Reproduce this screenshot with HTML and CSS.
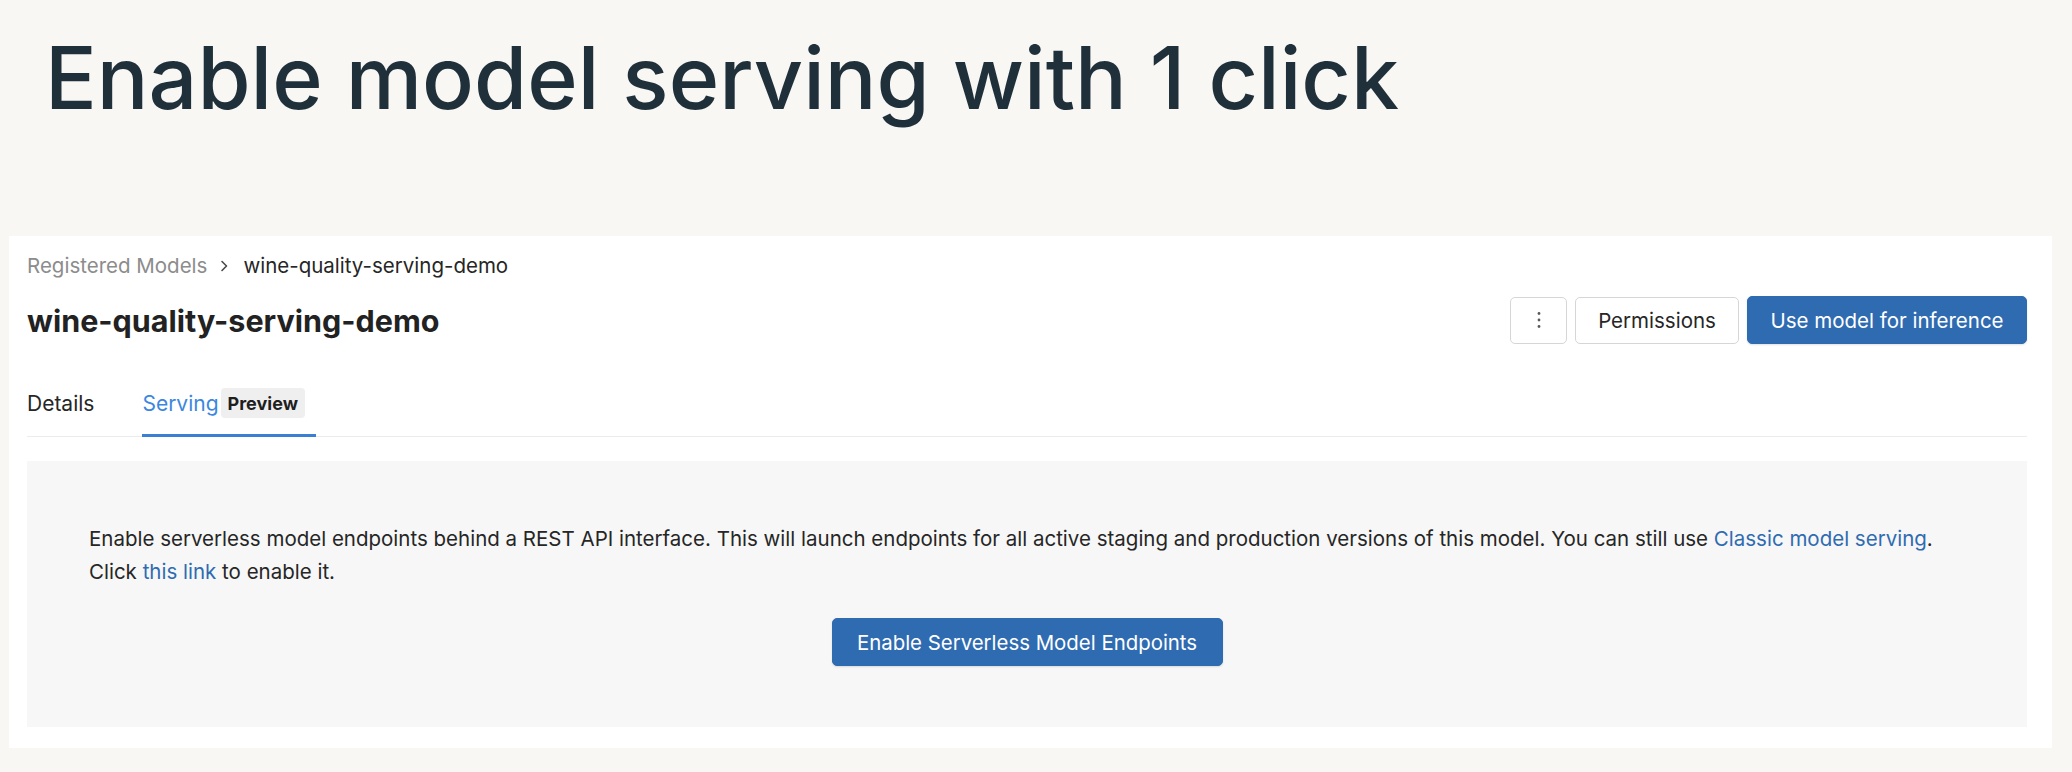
FILE: index.html
```html
<!DOCTYPE html>
<html lang="en">
<head>
<meta charset="utf-8">
<title>Enable model serving with 1 click</title>
<link rel="stylesheet" href="styles.css">
</head>
<body>
<div class="page">
  <h1 class="hero">Enable model serving with 1 click</h1>
  <section class="card">
    <nav class="breadcrumb">
      <span class="crumb-parent">Registered Models</span>
      <svg class="crumb-sep" width="10" height="14" viewBox="0 0 10 14" aria-hidden="true"><path d="M3 2.5 L7.5 7 L3 11.5" fill="none" stroke="#4a4a4a" stroke-width="1.6" stroke-linecap="round" stroke-linejoin="round"/></svg>
      <span class="crumb-current">wine-quality-serving-demo</span>
    </nav>
    <div class="title-row">
      <h2 class="model-title">wine-quality-serving-demo</h2>
      <div class="actions">
        <button class="btn btn-icon" aria-label="More">
          <svg width="4" height="18" viewBox="0 0 4 18" aria-hidden="true"><circle cx="2" cy="2.5" r="1.4" fill="#5a5a5a"/><circle cx="2" cy="9" r="1.4" fill="#5a5a5a"/><circle cx="2" cy="15.5" r="1.4" fill="#5a5a5a"/></svg>
        </button>
        <button class="btn btn-default">Permissions</button>
        <button class="btn btn-primary">Use model for inference</button>
      </div>
    </div>
    <div class="tabs">
      <div class="tab">Details</div>
      <div class="tab tab-active"><span>Serving</span><span class="badge">Preview</span></div>
    </div>
    <div class="panel">
      <p class="panel-text">Enable serverless model endpoints behind a REST API interface. This will launch endpoints for all active staging and production versions of this model. You can still use <a class="link" href="#">Classic model serving</a>.<br>Click <a class="link" href="#">this link</a> to enable it.</p>
      <div class="panel-actions">
        <button class="btn btn-primary btn-large">Enable Serverless Model Endpoints</button>
      </div>
    </div>
  </section>
</div>
</body>
</html>
```
FILE: styles.css
```css
* { box-sizing: border-box; }
html, body { margin: 0; padding: 0; }
body {
  background: #f8f7f4;
  font-family: Inter, "Noto Sans", "Liberation Sans", sans-serif;
  color: #262626;
}
.page {
  padding: 35px 20px 0 9px;
}
.hero {
  margin: 0 0 115px 0;
  padding-left: 36px;
  font-family: Inter, "Liberation Sans", sans-serif;
  font-size: 86px;
  line-height: 86px;
  font-weight: 500;
  letter-spacing: 0;
  color: #1f303a;
}
.card {
  background: #ffffff;
  height: 512px;
  padding: 18px 25px 21px 18px;
  display: flex;
  flex-direction: column;
}
.breadcrumb {
  display: flex;
  align-items: center;
  height: 24px;
  font-size: 20.5px;
  line-height: 24px;
}
.crumb-parent { color: #8c8c8c; }
.crumb-sep { margin: 0 14px 0 12px; }
.crumb-current { color: #262626; }
.title-row {
  margin-top: 18px;
  display: flex;
  align-items: center;
  justify-content: space-between;
  height: 48px;
}
.model-title {
  margin: 0;
  font-size: 30.5px;
  font-weight: 700;
  letter-spacing: 0;
  color: #222222;
}
.actions {
  display: flex;
  gap: 8px;
  align-items: center;
}
.btn {
  font-family: inherit;
  font-size: 20.5px;
  height: 47px;
  border-radius: 5px;
  border: 1px solid #d6d6d6;
  background: #ffffff;
  color: #262626;
  padding: 0;
  display: inline-flex;
  align-items: center;
  justify-content: center;
  cursor: pointer;
}
.btn-icon { width: 57px; }
.btn-default { width: 164px; }
.btn-primary {
  height: 48px;
  background: #2f6bb1;
  border-color: #2f6bb1;
  color: #ffffff;
  width: 280px;
  box-shadow: 0 1px 2px rgba(0,0,0,0.12);
}
.tabs {
  margin-top: 32px;
  height: 61px;
  display: flex;
  gap: 48px;
  box-shadow: inset 0 -1px 0 #ebebeb;
}
.tab {
  display: flex;
  align-items: center;
  gap: 2px;
  height: 61px;
  padding: 12px 0 16px 0;
  border-bottom: 3px solid transparent;
  font-size: 21px;
  color: #262626;
}
.tab-active {
  color: #3b87e0;
  border-bottom-color: #3a7fd2;
  padding-right: 11px;
}
.badge {
  display: inline-flex;
  align-items: center;
  height: 30px;
  padding: 0 7px;
  border-radius: 4px;
  background: #efefef;
  color: #1f1f1f;
  font-size: 18px;
  font-weight: 700;
}
.panel {
  margin-top: 24px;
  background: #f7f7f7;
  height: 266px;
  padding: 61px 62px 0 62px;
}
.panel-text {
  margin: 0;
  font-size: 20.5px;
  line-height: 33px;
  color: #262626;
}
.link { color: #2f6bb1; text-decoration: none; }
.panel-actions {
  margin-top: 30px;
  display: flex;
  justify-content: center;
}
.btn-large { width: 391px; font-size: 20.4px; }
```
